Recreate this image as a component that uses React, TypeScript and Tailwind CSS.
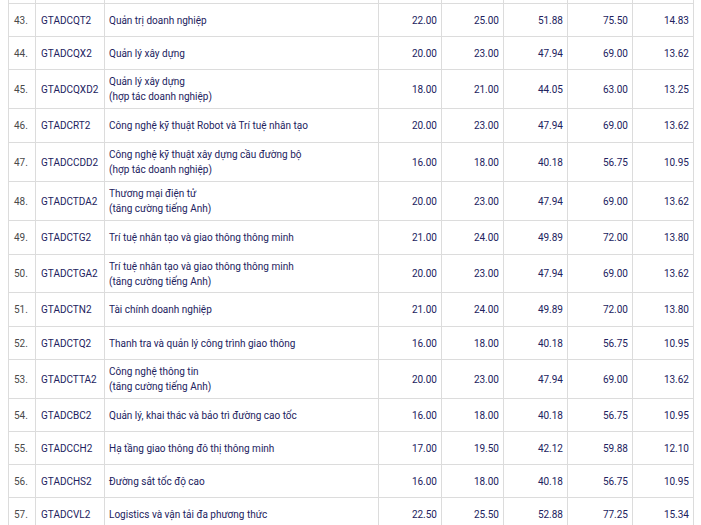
import React from "react";

type Row = {
  no: string;
  code: string;
  name: string[];
  scores: string[];
  h: string;
};

const rows: Row[] = [
  { no: "43.", code: "GTADCQT2", name: ["Quản trị doanh nghiệp"], scores: ["22.00", "25.00", "51.88", "75.50", "14.83"], h: "h-[33px]" },
  { no: "44.", code: "GTADCQX2", name: ["Quản lý xây dựng"], scores: ["20.00", "23.00", "47.94", "69.00", "13.62"], h: "h-[33px]" },
  { no: "45.", code: "GTADCQXD2", name: ["Quản lý xây dựng", "(hợp tác doanh nghiệp)"], scores: ["18.00", "21.00", "44.05", "63.00", "13.25"], h: "h-[39px]" },
  { no: "46.", code: "GTADCRT2", name: ["Công nghệ kỹ thuật Robot và Trí tuệ nhân tạo"], scores: ["20.00", "23.00", "47.94", "69.00", "13.62"], h: "h-[34px]" },
  { no: "47.", code: "GTADCCDD2", name: ["Công nghệ kỹ thuật xây dựng cầu đường bộ", "(hợp tác doanh nghiệp)"], scores: ["16.00", "18.00", "40.18", "56.75", "10.95"], h: "h-[39px]" },
  { no: "48.", code: "GTADCTDA2", name: ["Thương mại điện tử", "(tăng cường tiếng Anh)"], scores: ["20.00", "23.00", "47.94", "69.00", "13.62"], h: "h-[39px]" },
  { no: "49.", code: "GTADCTG2", name: ["Trí tuệ nhân tạo và giao thông thông minh"], scores: ["21.00", "24.00", "49.89", "72.00", "13.80"], h: "h-[34px]" },
  { no: "50.", code: "GTADCTGA2", name: ["Trí tuệ nhân tạo và giao thông thông minh", "(tăng cường tiếng Anh)"], scores: ["20.00", "23.00", "47.94", "69.00", "13.62"], h: "h-[38px]" },
  { no: "51.", code: "GTADCTN2", name: ["Tài chính doanh nghiệp"], scores: ["21.00", "24.00", "49.89", "72.00", "13.80"], h: "h-[34px]" },
  { no: "52.", code: "GTADCTQ2", name: ["Thanh tra và quản lý công trình giao thông"], scores: ["16.00", "18.00", "40.18", "56.75", "10.95"], h: "h-[33px]" },
  { no: "53.", code: "GTADCTTA2", name: ["Công nghệ thông tin", "(tăng cường tiếng Anh)"], scores: ["20.00", "23.00", "47.94", "69.00", "13.62"], h: "h-[39px]" },
  { no: "54.", code: "GTADCBC2", name: ["Quản lý, khai thác và bảo trì đường cao tốc"], scores: ["16.00", "18.00", "40.18", "56.75", "10.95"], h: "h-[33px]" },
  { no: "55.", code: "GTADCCH2", name: ["Hạ tầng giao thông đô thị thông minh"], scores: ["17.00", "19.50", "42.12", "59.88", "12.10"], h: "h-[33px]" },
  { no: "56.", code: "GTADCHS2", name: ["Đường sắt tốc độ cao"], scores: ["16.00", "18.00", "40.18", "56.75", "10.95"], h: "h-[33px]" },
  { no: "57.", code: "GTADCVL2", name: ["Logistics và vận tải đa phương thức"], scores: ["22.50", "25.50", "52.88", "77.25", "15.34"], h: "h-[33px]" },
];

// column widths measured from the grid lines
const cols = "grid grid-cols-[27px_69px_274px_63px_62px_64px_65px_61px]";
const cell = "border-r border-b border-[#dcdcdc] flex items-center";

export default function App() {
  return (
    <div className="bg-white min-h-screen font-['Roboto',sans-serif] text-[10px] leading-[15px] text-[#22225e]">
      <div className="ml-[8px] w-[686px] border-l border-[#dcdcdc]">
        {/* tail of the previous row, scrolled off */}
        <div className={`${cols} h-[4px]`}>
          {Array.from({ length: 8 }).map((_, i) => (
            <div key={i} className="border-r border-b border-[#dcdcdc]" />
          ))}
        </div>

        {rows.map(row => (
          <div key={row.no} className={`${cols} ${row.h}`}>
            <div className={`${cell} pl-[5px] text-[#4a4a4a]`}>{row.no}</div>
            <div className={`${cell} pl-[5px]`}>{row.code}</div>
            <div className={`${cell} pl-[4px]`}>
              <div className="flex flex-col">
                {row.name.map((line, i) => (
                  <span key={i}>{line}</span>
                ))}
              </div>
            </div>
            {row.scores.map((s, i) => (
              <div key={i} className={`${cell} justify-end pr-[4px]`}>
                {s}
              </div>
            ))}
          </div>
        ))}
      </div>
    </div>
  );
}
